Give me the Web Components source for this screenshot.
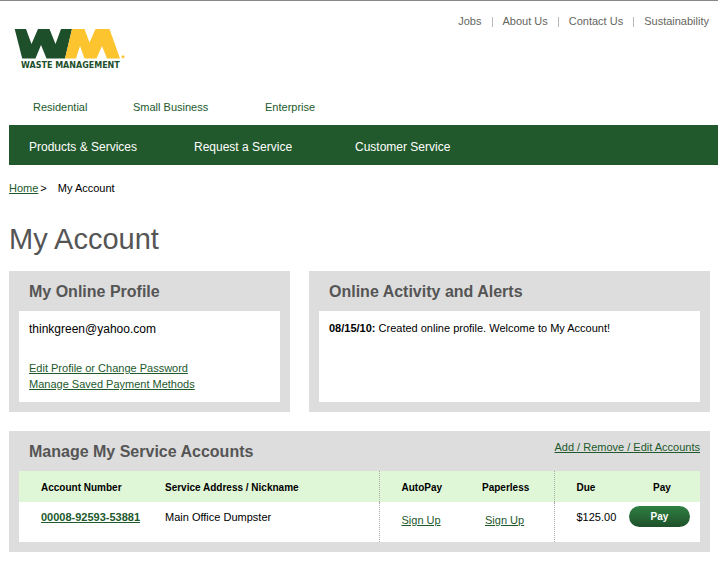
<!DOCTYPE html>
<html lang="en">
<head>
<meta charset="utf-8">
<title>My Account</title>
<style>
body { margin: 0; background: #fff; color: #000; font-family: "Liberation Sans", Arial, sans-serif; font-size: 11px; line-height: 16px; }
</style>
</head>
<body>
<account-page></account-page>
<script>
const define = (name, html) => {
  const template = document.createElement('template');
  template.innerHTML = html;
  customElements.define(name, class extends HTMLElement {
    constructor() {
      super();
      this.attachShadow({ mode: 'open' }).append(template.content.cloneNode(true));
    }
  });
};

define('brand-logo', `
<style>
:host { display: block; width: 112px; }
svg { display: block; }
text { font: bold 8px "DejaVu Sans", sans-serif; fill: #1d4f2b; }
</style>
<svg width="112" height="42" viewBox="14 28 112 42" role="img" aria-label="Waste Management">
  <path fill="#1d4f2b" d="M14.700 29H26L31.500 44 38 29H49.500L55.500 44 61 29H72L65 58.500H46.500L41 45 35.500 58.500H22.200Z"/>
  <path fill="#fcc42f" d="M72 29H84.500L89.500 42.500 95.500 29H109.500L120 58.500H107L102 46 96.500 58.500H84.500L80 46 76 58.500H65Z"/>
  <circle cx="123" cy="56.800" r="1.500" fill="#fcc42f"/>
  <text x="21" y="68">WASTE MANAGEMENT</text>
</svg>`);

define('utility-nav', `
<style>
:host { display: block; color: #66665e; }
nav { display: flex; gap: 10px; }
a { color: inherit; text-decoration: none; }
i { width: 1px; height: 10px; margin-top: 4px; background: #bbb; }
</style>
<nav aria-label="Utility"><a href="#">Jobs</a><i></i><a href="#">About Us</a><i></i><a href="#">Contact Us</a><i></i><a href="#">Sustainability</a></nav>`);

define('segment-nav', `
<style>
:host { display: block; }
nav { display: flex; padding-left: 24px; }
a { color: #22592c; text-decoration: none; }
a:nth-child(1) { width: 100px; }
a:nth-child(2) { width: 132px; }
</style>
<nav aria-label="Customer type"><a href="#">Residential</a><a href="#">Small Business</a><a href="#">Enterprise</a></nav>`);

define('main-nav', `
<style>
:host { display: block; background: #22592c; font-size: 12px; }
nav { display: flex; padding: 14px 20px 10px; }
a { color: #fff; text-decoration: none; }
a:nth-child(1) { width: 165px; }
a:nth-child(2) { width: 161px; }
</style>
<nav aria-label="Main"><a href="#">Products &amp; Services</a><a href="#">Request a Service</a><a href="#">Customer Service</a></nav>`);

define('bread-crumb', `
<style>
:host { display: block; }
nav { display: flex; }
a { color: #22592c; }
.separator { margin: 0 11px 0 2px; }
</style>
<nav aria-label="Breadcrumb"><a href="#">Home</a><span class="separator">&gt;</span><span aria-current="page">My Account</span></nav>`);

define('info-panel', `
<style>
:host { display: flex; flex-direction: column; background: #ddd; padding: 0 10px 10px; }
header { display: flex; justify-content: space-between; height: 40px; padding-left: 10px; color: #555; }
.body { flex: 1; background: #fff; }
::slotted(h2) { margin: 11px 0 0; font-size: 16px; line-height: 20px; }
::slotted([slot=action]) { margin-top: 8px; color: #22592c; }
</style>
<header><slot name="title"></slot><slot name="action"></slot></header>
<div class="body"><slot></slot></div>`);

define('profile-details', `
<style>
:host { display: block; padding: 10px; }
p { margin: 0; font-size: 12px; }
ul { list-style: none; margin: 23px 0 0; padding: 0; }
a { color: #22592c; }
</style>
<p>thinkgreen@yahoo.com</p>
<ul><li><a href="#">Edit Profile or Change Password</a></li><li><a href="#">Manage Saved Payment Methods</a></li></ul>`);

define('alert-list', `
<style>
:host { display: block; padding: 9px 10px; }
p { margin: 0; }
</style>
<p><b>08/15/10:</b> Created online profile. Welcome to My Account!</p>`);

define('account-table', `
<style>
:host { display: block; }
table { width: 100%; border-collapse: collapse; table-layout: fixed; }
th, td { box-sizing: border-box; text-align: left; vertical-align: top; padding: 0 0 0 22px; }
th { height: 31px; padding-top: 9px; background: #e0f7d7; font-size: 10px; }
td { height: 40px; padding-top: 7px; }
.address { padding-left: 0; }
.split { border-left: 1px dotted #aaa; }
th.paperless { padding-left: 18px; }
td.paperless { padding-left: 21px; }
td.signup { padding-top: 10px; }
th.pay { padding-left: 24px; }
td.pay { padding: 4px 0 0; }
a { color: #22592c; }
button { display: block; width: 61px; height: 21px; padding: 0; border: 0; border-radius: 11px; background: linear-gradient(#2f8043, #1e5029); color: #fff; font: bold 10px/21px "Liberation Sans", Arial, sans-serif; }
</style>
<table>
<colgroup><col style="width:146px"><col><col style="width:85px"><col style="width:90px"><col style="width:75px"><col style="width:71px"></colgroup>
<thead><tr><th>Account Number</th><th class="address">Service Address / Nickname</th><th class="split">AutoPay</th><th class="paperless">Paperless</th><th class="split">Due</th><th class="pay">Pay</th></tr></thead>
<tbody><tr><td><a href="#"><b>00008-92593-53881</b></a></td><td class="address">Main Office Dumpster</td><td class="split signup"><a href="#">Sign Up</a></td><td class="paperless signup"><a href="#">Sign Up</a></td><td class="split">$125.00</td><td class="pay"><button type="button">Pay</button></td></tr></tbody>
</table>`);

define('account-page', `
<style>
:host { display: block; border-top: 1px solid #888; }
.top { display: flex; justify-content: space-between; padding: 12px 9px 0 14px; }
brand-logo { margin-top: 15px; }
segment-nav { padding: 29px 0 10px 9px; }
main-nav { margin-left: 9px; }
main { padding: 15px 8px 10px 9px; }
h1 { margin: 27px 0 16px; font-size: 29px; font-weight: 400; line-height: 32px; color: #555; }
.row { display: grid; grid-template-columns: 281fr 401fr; gap: 19px; margin-bottom: 19px; }
</style>
<header>
  <div class="top"><brand-logo></brand-logo><utility-nav></utility-nav></div>
  <segment-nav></segment-nav>
  <main-nav></main-nav>
</header>
<main>
  <bread-crumb></bread-crumb>
  <h1>My Account</h1>
  <div class="row">
    <info-panel><h2 slot="title">My Online Profile</h2><profile-details></profile-details></info-panel>
    <info-panel><h2 slot="title">Online Activity and Alerts</h2><alert-list></alert-list></info-panel>
  </div>
  <info-panel><h2 slot="title">Manage My Service Accounts</h2><a slot="action" href="#">Add / Remove / Edit Accounts</a><account-table></account-table></info-panel>
</main>`);
</script>
</body>
</html>
